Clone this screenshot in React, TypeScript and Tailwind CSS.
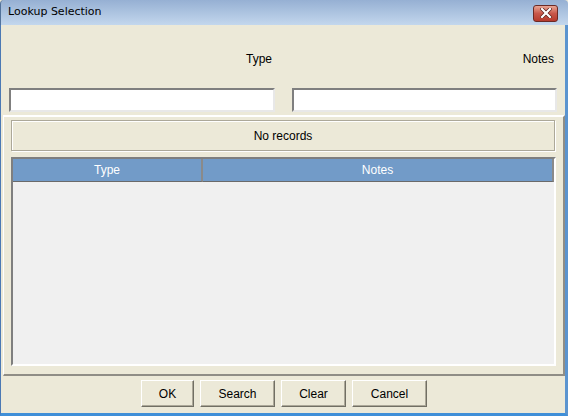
import React from 'react'

const font = { fontFamily: '"Liberation Sans", Arial, sans-serif' }

function Btn({ label, w }: { label: string; w: string }) {
  return (
    <button
      className={`${w} h-[27px] bg-[#ece9d8] text-[12px] text-black border border-t-white border-l-white border-r-[#716f64] border-b-[#716f64] shadow-[inset_-1px_-1px_0_#aca899]`}
    >
      {label}
    </button>
  )
}

export default function App() {
  return (
    <div className="w-[568px] h-[416px] flex flex-col bg-[#ece9d8] text-black" style={font}>
      {/* title bar */}
      <div className="h-[25px] shrink-0 flex items-center justify-between pl-[7px] pr-[10px] bg-gradient-to-b from-[#96b0d3] to-[#c3d7ed] border-l border-[#52729a] rounded-t-[4px]">
        <span className="text-black" style={{ fontFamily: '"DejaVu Sans", sans-serif', fontSize: 11 }}>
          Lookup Selection
        </span>
        <div className="w-[25px] h-[17px] mt-[1px] rounded-[3px] border border-[#6b2a25] bg-gradient-to-b from-[#e8a594] via-[#c8574a] to-[#b53a2c] flex items-center justify-center">
          <svg width="12" height="10" viewBox="0 0 12 10">
            <path d="M2 1 L10 9 M10 1 L2 9" stroke="#5a1f1a" strokeWidth="3.6" strokeLinecap="square" />
            <path d="M2 1 L10 9 M10 1 L2 9" stroke="#ffffff" strokeWidth="2.2" strokeLinecap="square" />
          </svg>
        </div>
      </div>

      {/* body */}
      <div className="flex-1 flex flex-col border-l-[1px] border-l-[#4b79b4] border-r-[3px] border-r-[#5b94cf] border-b-[3px] border-b-[#3f8fd8]">
        {/* search fields */}
        <div className="h-[90px] shrink-0 grid grid-cols-[266px_265px] gap-x-[17px] pl-[8px] pt-[25px]">
          <div className="flex flex-col">
            <div className="h-[15px] text-right text-[12px] pr-[3px]">Type</div>
            <input className="mt-[23px] h-[24px] bg-white border-2 border-t-[#7f7f7f] border-l-[#7f7f7f] border-r-[#e8e8e8] border-b-[#e8e8e8] outline-none" />
          </div>
          <div className="flex flex-col">
            <div className="h-[15px] text-right text-[12px] pr-[3px]">Notes</div>
            <input className="mt-[23px] h-[24px] bg-white border-2 border-t-[#7f7f7f] border-l-[#7f7f7f] border-r-[#e8e8e8] border-b-[#e8e8e8] outline-none" />
          </div>
        </div>

        {/* results panel */}
        <div className="h-[261px] shrink-0 ml-[2px] flex flex-col border-t-2 border-t-white border-l border-l-white border-r-2 border-r-[#8f8d86] border-b-2 border-b-[#8f8d86] px-[7px] pt-[3px]">
          <div className="h-[31px] shrink-0 flex items-center justify-center text-[12px] border border-[#aca899] shadow-[inset_1px_1px_0_white,1px_1px_0_white] mr-[1px]">
            No records
          </div>
          <div className="mt-[6px] h-[209px] flex flex-col bg-[#f0f0f0] border-2 border-t-[#7f7f7f] border-l-[#7f7f7f] border-r-white border-b-white">
            <div className="h-[23px] shrink-0 flex text-white text-[12px] bg-[#729bc8]">
              <div className="w-[190px] flex items-center justify-center border-r-2 border-r-[#8a8a8a] border-b border-b-[#6a6a6a]">
                Type
              </div>
              <div className="flex-1 flex items-center justify-center border-r-2 border-r-[#8a8a8a] border-b border-b-[#6a6a6a]">
                Notes
              </div>
            </div>
          </div>
        </div>

        {/* buttons */}
        <div className="flex-1 flex items-start justify-center gap-[6px] pt-[4px] pl-[2px]">
          <Btn label="OK" w="w-[53px]" />
          <Btn label="Search" w="w-[75px]" />
          <Btn label="Clear" w="w-[65px]" />
          <Btn label="Cancel" w="w-[75px]" />
        </div>
      </div>
    </div>
  )
}
